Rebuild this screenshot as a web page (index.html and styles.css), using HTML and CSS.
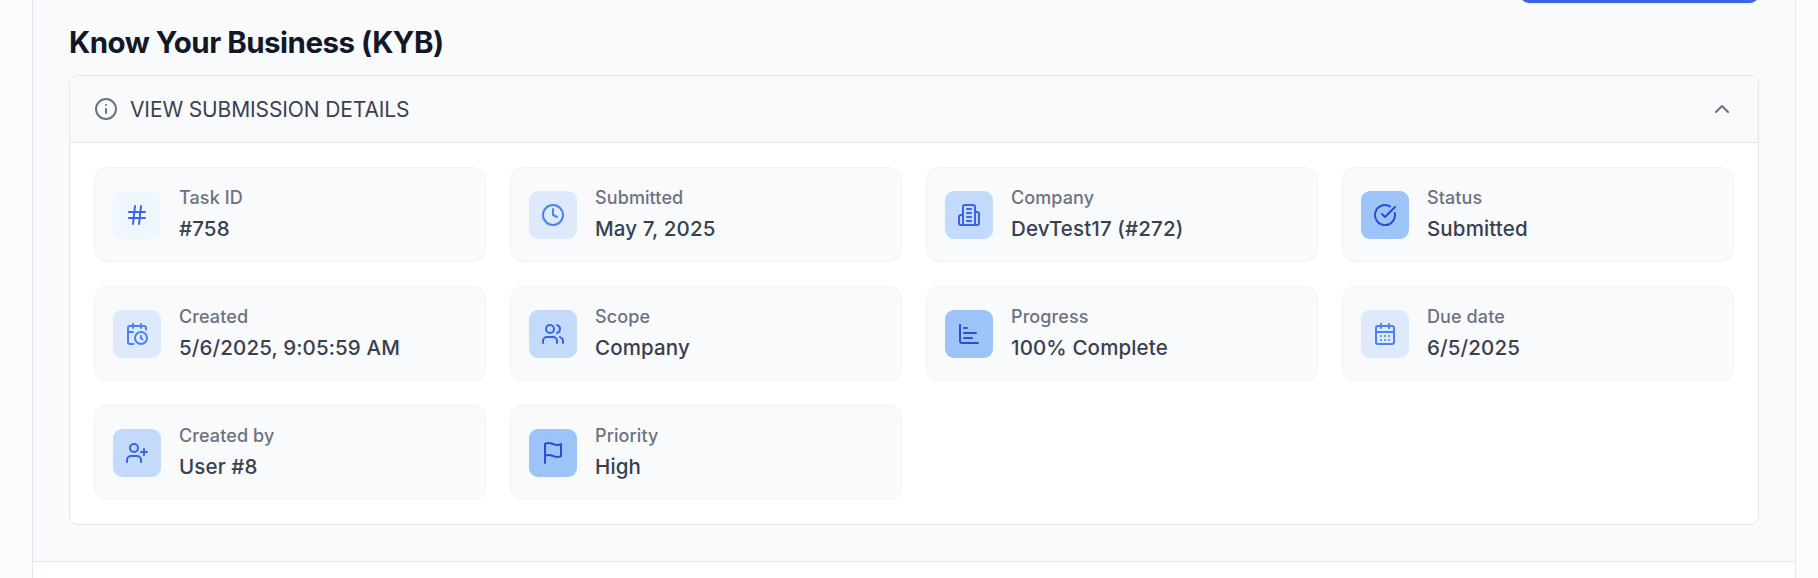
FILE: index.html
```
<!DOCTYPE html>
<html lang="en">
<head>
<meta charset="utf-8">
<title>Know Your Business (KYB)</title>
<link rel="stylesheet" href="styles.css">
</head>
<body>
<main class="page">
  <section class="intro">
    <div class="actions"><button class="primary" type="button" aria-label="Download"></button></div>
    <h1 class="title">Know Your Business (KYB)</h1>
    <div class="panel">
      <header class="panel-head">
        <svg class="icon" viewBox="0 0 24 24"><circle cx="12" cy="12" r="10"/><path d="M12 16v-4M12 8h.01"/></svg>
        <span class="panel-title">VIEW SUBMISSION DETAILS</span>
        <svg class="icon" viewBox="0 0 24 24"><path d="m18 15-6-6-6 6"/></svg>
      </header>
      <div class="grid">
        <div class="tile">
          <div class="badge tone-1"><svg class="icon" viewBox="0 0 24 24"><path d="M4 9h16M4 15h16M10 3 8 21M16 3l-2 18"/></svg></div>
          <div class="text"><span class="label">Task ID</span><span class="value">#758</span></div>
        </div>
        <div class="tile">
          <div class="badge tone-2"><svg class="icon" viewBox="0 0 24 24"><circle cx="12" cy="12" r="10"/><path d="M12 6v6l4 2"/></svg></div>
          <div class="text"><span class="label">Submitted</span><span class="value">May 7, 2025</span></div>
        </div>
        <div class="tile">
          <div class="badge tone-3"><svg class="icon" viewBox="0 0 24 24"><path d="M6 22V4a2 2 0 0 1 2-2h8a2 2 0 0 1 2 2v18Z"/><path d="M6 12H4a2 2 0 0 0-2 2v6a2 2 0 0 0 2 2h2M18 9h2a2 2 0 0 1 2 2v9a2 2 0 0 1-2 2h-2M10 6h4M10 10h4M10 14h4M10 18h4"/></svg></div>
          <div class="text"><span class="label">Company</span><span class="value">DevTest17 (#272)</span></div>
        </div>
        <div class="tile">
          <div class="badge tone-4"><svg class="icon" viewBox="0 0 24 24"><path d="M21.801 10A10 10 0 1 1 17 3.335"/><path d="m9 11 3 3L22 4"/></svg></div>
          <div class="text"><span class="label">Status</span><span class="value">Submitted</span></div>
        </div>
        <div class="tile">
          <div class="badge tone-2"><svg class="icon" viewBox="0 0 24 24"><path d="M21 7.5V6a2 2 0 0 0-2-2H5a2 2 0 0 0-2 2v14a2 2 0 0 0 2 2h3.5M16 2v4M8 2v4M3 10h5M17.5 17.5 16 16.3V14"/><circle cx="16" cy="16" r="6"/></svg></div>
          <div class="text"><span class="label">Created</span><span class="value">5/6/2025, 9:05:59 AM</span></div>
        </div>
        <div class="tile">
          <div class="badge tone-3"><svg class="icon" viewBox="0 0 24 24"><path d="M16 21v-2a4 4 0 0 0-4-4H6a4 4 0 0 0-4 4v2"/><circle cx="9" cy="7" r="4"/><path d="M22 21v-2a4 4 0 0 0-3-3.87M16 3.13a4 4 0 0 1 0 7.75"/></svg></div>
          <div class="text"><span class="label">Scope</span><span class="value">Company</span></div>
        </div>
        <div class="tile">
          <div class="badge tone-4"><svg class="icon" viewBox="0 0 24 24"><path d="M3 3v16a2 2 0 0 0 2 2h16M7 16h8M7 11h12M7 6h3"/></svg></div>
          <div class="text"><span class="label">Progress</span><span class="value">100% Complete</span></div>
        </div>
        <div class="tile">
          <div class="badge tone-2"><svg class="icon" viewBox="0 0 24 24"><path d="M8 2v4M16 2v4M3 10h18M8 14h.01M12 14h.01M16 14h.01M8 18h.01M12 18h.01M16 18h.01"/><rect x="3" y="4" width="18" height="18" rx="2"/></svg></div>
          <div class="text"><span class="label">Due date</span><span class="value">6/5/2025</span></div>
        </div>
        <div class="tile">
          <div class="badge tone-3"><svg class="icon" viewBox="0 0 24 24"><path d="M16 21v-2a4 4 0 0 0-4-4H6a4 4 0 0 0-4 4v2"/><circle cx="9" cy="7" r="4"/><path d="M19 8v6M22 11h-6"/></svg></div>
          <div class="text"><span class="label">Created by</span><span class="value">User #8</span></div>
        </div>
        <div class="tile">
          <div class="badge tone-4"><svg class="icon" viewBox="0 0 24 24"><path d="M4 15s1-1 4-1 5 2 8 2 4-1 4-1V3s-1 1-4 1-5-2-8-2-4 1-4 1zM4 22v-7"/></svg></div>
          <div class="text"><span class="label">Priority</span><span class="value">High</span></div>
        </div>
      </div>
    </div>
  </section>
</main>
</body>
</html>
```
FILE: styles.css
```
* {
  box-sizing: border-box;
}

body {
  margin: 0;
  height: 578px;
  overflow: hidden;
  background: #fbfcfe;
  font-family: Inter, "Liberation Sans", sans-serif;
}

.page {
  height: 578px;
  margin: 0 22px 0 32px;
  background: #fff;
  border-left: 1px solid #e0e7f0;
  border-right: 1px solid #e4e6ea;
}

.intro {
  height: 562px;
  padding: 0 36px;
  background: #f9fafc;
  border-bottom: 1px solid #e4e6ea;
}

.actions {
  display: flex;
  height: 24px;
  justify-content: flex-end;
  overflow: hidden;
}

.primary {
  width: 239px;
  height: 48px;
  margin-top: -45px;
  border: 0;
  border-radius: 9px;
  background: #3864e5;
  box-shadow: 0 1px 2px rgba(0, 0, 0, 0.05);
}

.title {
  margin: 0 0 15px;
  color: #121827;
  font-size: 29.5px;
  font-weight: 700;
  letter-spacing: -0.5px;
  line-height: 36px;
}

.panel {
  overflow: hidden;
  background: #fff;
  border: 1px solid #e4e6ea;
  border-radius: 9px;
}

.panel-head {
  display: flex;
  height: 67px;
  align-items: center;
  gap: 12px;
  padding: 0 24px;
  background: #f9fafc;
  border-bottom: 1px solid #e4e6ea;
  color: #6c7280;
}

.panel-title {
  flex: 1;
  padding-top: 2px;
  color: #394150;
  font-size: 21px;
  letter-spacing: -0.12px;
  line-height: 28px;
}

.icon {
  display: block;
  width: 24px;
  height: 24px;
  flex: none;
  fill: none;
  stroke: currentColor;
  stroke-width: 2;
  stroke-linecap: round;
  stroke-linejoin: round;
}

.grid {
  display: grid;
  grid-template-columns: repeat(4, 1fr);
  gap: 24px;
  padding: 24px;
}

.tile {
  display: flex;
  height: 95px;
  align-items: center;
  gap: 18px;
  padding: 18px;
  background: #f9fafc;
  border: 1px solid #f2f4f6;
  border-radius: 12px;
}

.badge {
  display: grid;
  width: 48px;
  height: 48px;
  place-items: center;
  border-radius: 9px;
}

.tone-1 {
  background: #eff6fe;
  color: #3864e5;
}

.tone-2 {
  background: #dee9fc;
  color: #4b82f0;
}

.tone-3 {
  background: #c4dafb;
  color: #3864e5;
}

.tone-4 {
  background: #9dc4f9;
  color: #2b4fd1;
}

.text {
  display: flex;
  flex-direction: column;
  gap: 6px;
}

.label {
  color: #6c7280;
  font-size: 18px;
  font-weight: 500;
  letter-spacing: 0.1px;
  line-height: 23px;
}

.value {
  color: #384050;
  font-size: 20.5px;
  font-weight: 500;
  letter-spacing: 0.13px;
  line-height: 28px;
}
```
